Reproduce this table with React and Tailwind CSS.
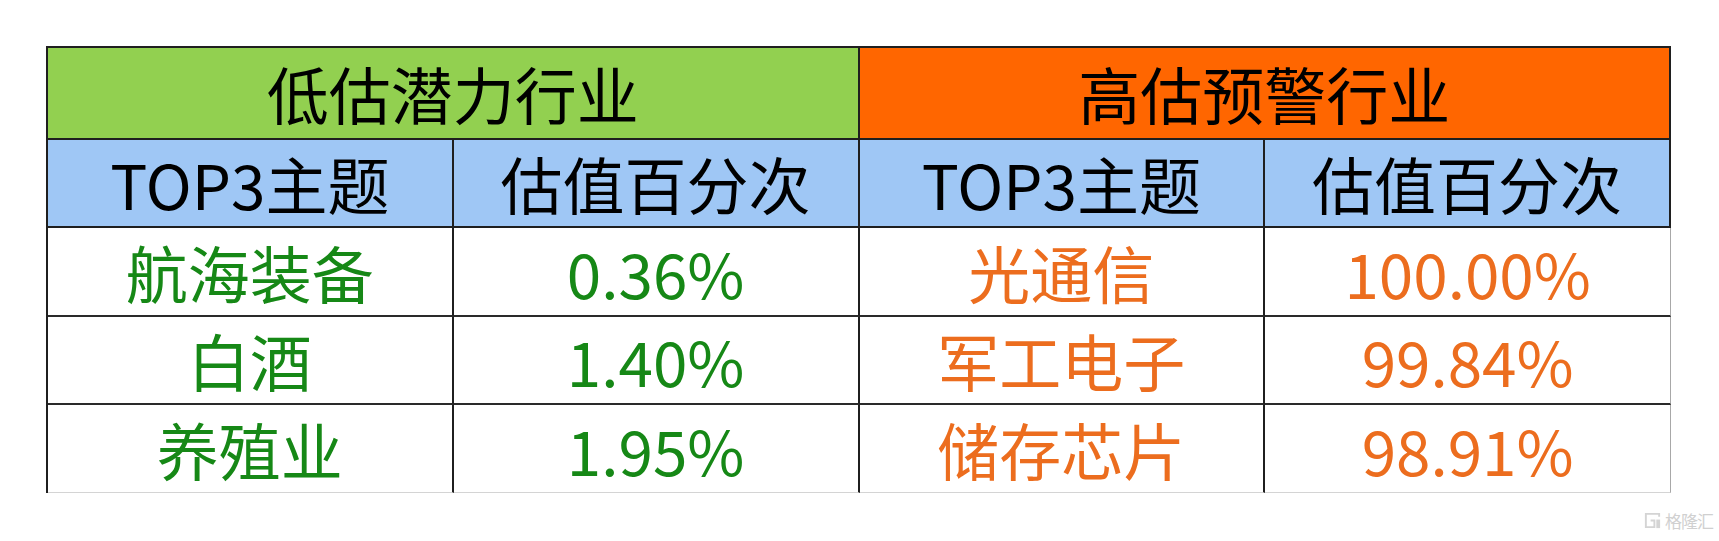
import React from "react";

const green = [
  ["航海装备", "0.36%"],
  ["白酒", "1.40%"],
  ["养殖业", "1.95%"],
];

const orange = [
  ["光通信", "100.00%"],
  ["军工电子", "99.84%"],
  ["储存芯片", "98.91%"],
];

const font = { fontFamily: '"Noto Sans CJK SC", "Noto Sans", sans-serif' };

export default function App() {
  return (
    <div className="w-[1719px] h-[541px] bg-white relative" style={font}>
      <div className="pt-[46px] pl-[46px]">
        <div className="w-[1625px] border-l-2 border-t-2 border-[#1f1f1f]">
          {/* title row */}
          <div className="grid grid-cols-2 h-[92px]">
            <div className="bg-[#92d050] border-r-2 border-b-2 border-[#1f1f1f] flex items-center justify-center text-[62px] text-black leading-none">
              低估潜力行业
            </div>
            <div className="bg-[#ff6600] border-r-2 border-b-2 border-[#1f1f1f] flex items-center justify-center text-[62px] text-black leading-none">
              高估预警行业
            </div>
          </div>

          {/* column headers */}
          <div className="grid grid-cols-4 h-[88px] bg-[#9fc7f5]">
            {["TOP3主题", "估值百分次", "TOP3主题", "估值百分次"].map((t, i) => (
              <div
                key={i}
                className="border-r-2 border-b-2 border-[#1f1f1f] flex items-center justify-center text-[62px] text-black leading-none"
              >
                {t}
              </div>
            ))}
          </div>

          {/* data rows */}
          {green.map((g, i) => {
            const o = orange[i];
            const last = i === green.length - 1;
            const rowH = i === 0 ? "h-[89px]" : "h-[88px]";
            const bottom = last
              ? "border-b border-[#d4d4d4]"
              : "border-b-2 border-[#2a2a2a]";
            return (
              <div key={i} className={`grid grid-cols-4 ${rowH}`}>
                <div className={`border-r-2 border-r-[#1f1f1f] ${bottom} flex items-center justify-center text-[62px] text-[#168816] leading-none`}>
                  {g[0]}
                </div>
                <div className={`border-r-2 border-r-[#1f1f1f] ${bottom} flex items-center justify-center text-[62px] text-[#168816] leading-none`}>
                  {g[1]}
                </div>
                <div className={`border-r-2 border-r-[#1f1f1f] ${bottom} flex items-center justify-center text-[62px] text-[#ec6d1e] leading-none`}>
                  {o[0]}
                </div>
                <div className={`border-r border-r-[#a8a8a8] ${bottom} flex items-center justify-center text-[62px] text-[#ec6d1e] leading-none`}>
                  {o[1]}
                </div>
              </div>
            );
          })}
        </div>
      </div>

      {/* watermark */}
      <div className="absolute left-[1643px] top-[511px] flex items-center gap-[3px] text-[#d0d0d0]">
        <svg width="19" height="19" viewBox="0 0 20 20" fill="none">
          <path d="M2 2h16v4h-2V4H4v12h7v-5h-3V9h5v9H2z" fill="#d4d4d4" />
          <path d="M14 9h4v9h-4z" fill="#d4d4d4" />
        </svg>
        <span className="text-[17px] leading-none tracking-[-1px]">格隆汇</span>
      </div>
    </div>
  );
}
